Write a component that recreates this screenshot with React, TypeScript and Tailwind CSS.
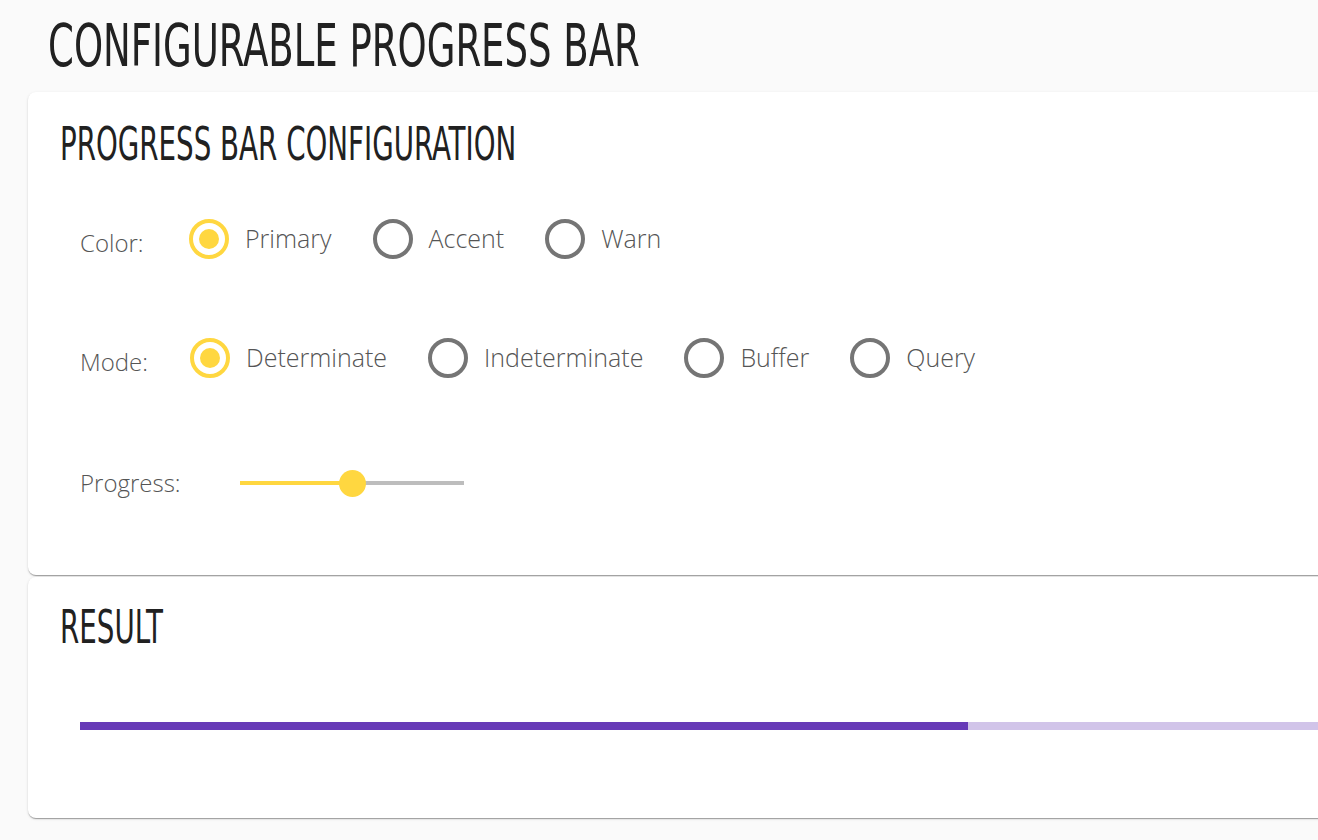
import React from "react";

const heading = "font-['Liberation_Sans_Narrow','DejaVu_Sans_Condensed',sans-serif] font-normal text-[#212121]";
const body = "font-['Open_Sans',sans-serif] font-light";

type RadioProps = { label: string; checked?: boolean };

const Radio: React.FC<RadioProps> = ({ label, checked }) => (
  <div className="flex items-center mr-[41px]">
    <div
      className={
        checked
          ? "w-[40px] h-[40px] rounded-full border-[4px] border-[#ffd740] flex items-center justify-center"
          : "w-[40px] h-[40px] rounded-full border-[4px] border-[#757575]"
      }
    >
      {checked && <div className="w-[20px] h-[20px] rounded-full bg-[#ffd740]" />}
    </div>
    <span className={`${body} ml-[16px] text-[25px] text-[#555]`}>{label}</span>
  </div>
);

const Card: React.FC<{ className?: string; children: React.ReactNode }> = ({ className, children }) => (
  <div
    className={`w-[1880px] bg-white rounded-lg shadow-[0_2px_1px_-1px_rgba(0,0,0,0.2),0_1px_1px_0_rgba(0,0,0,0.14),0_1px_3px_0_rgba(0,0,0,0.12)] px-[32px] ${className ?? ""}`}
  >
    {children}
  </div>
);

const App: React.FC = () => {
  const progress = 50;

  return (
    <div className="w-screen h-screen overflow-hidden bg-[#fafafa]">
      <div className="w-[1936px]">
        <h1 className={`${heading} pl-[48px] pt-[17px] text-[58px] leading-none`}>
          <span className="inline-block origin-left scale-x-[0.71] whitespace-nowrap">CONFIGURABLE PROGRESS BAR</span>
        </h1>

        <div className="ml-[28px] mt-[17px]">
          <Card className="pt-[29px] pb-[72px]">
            <h2 className={`${heading} text-[46px] leading-none`}>
              <span className="inline-block origin-left scale-x-[0.67] whitespace-nowrap">PROGRESS BAR CONFIGURATION</span>
            </h2>

            <div className="pl-[20px]">
              <div className="flex items-center h-[40px] mt-[52px]">
                <span className={`${body} w-[109px] pt-[8px] text-[24px] text-[#555]`}>Color:</span>
                <Radio label="Primary" checked />
                <Radio label="Accent" />
                <Radio label="Warn" />
              </div>

              <div className="flex items-center h-[40px] mt-[79px]">
                <span className={`${body} w-[110px] pt-[8px] text-[24px] text-[#555]`}>Mode:</span>
                <Radio label="Determinate" checked />
                <Radio label="Indeterminate" />
                <Radio label="Buffer" />
                <Radio label="Query" />
              </div>

              <div className="flex items-center h-[40px] mt-[85px]">
                <span className={`${body} w-[160px] text-[24px] text-[#555]`}>Progress:</span>
                <div className="relative w-[224px] h-[4px] bg-[#bdbdbd]">
                  <div className="h-full bg-[#ffd740]" style={{ width: `${progress}%` }} />
                  <div
                    className="absolute top-1/2 w-[27px] h-[27px] -ml-[13px] -mt-[13.5px] rounded-full bg-[#ffd740]"
                    style={{ left: `${progress}%` }}
                  />
                </div>
              </div>
            </div>
          </Card>

          <Card className="mt-[2px] pt-[27px] pb-[88px]">
            <h2 className={`${heading} text-[46px] leading-none`}>
              <span className="inline-block origin-left scale-x-[0.67] whitespace-nowrap">RESULT</span>
            </h2>
            <div className="ml-[20px] mt-[72px] w-[1776px] h-[8px] bg-[#d1c4e9]">
              <div className="h-full bg-[#673ab7]" style={{ width: `${progress}%` }} />
            </div>
          </Card>
        </div>
      </div>
    </div>
  );
};

export default App;
